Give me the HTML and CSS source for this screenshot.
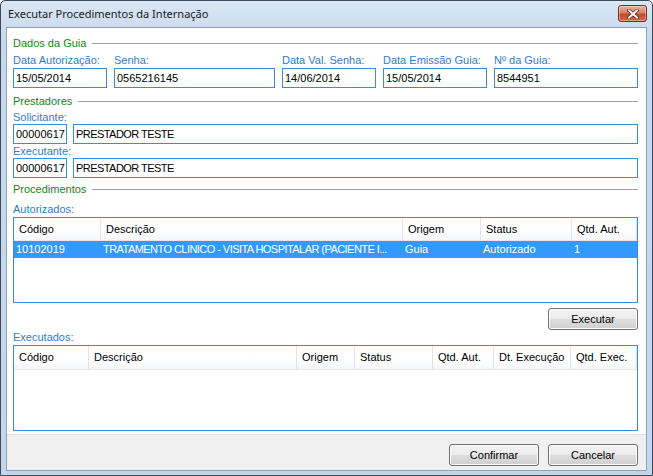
FILE: index.html
```html
<!DOCTYPE html>
<html>
<head>
<meta charset="utf-8">
<link rel="stylesheet" href="styles.css">
</head>
<body>
<div class="window">
  <div class="titlebar">
    <span class="title">Executar Procedimentos da Internação</span>
    <button class="close" aria-label="Fechar">
      <svg width="14" height="10" viewBox="0 0 14 10">
        <path d="M3 1.5 L11 8.5 M11 1.5 L3 8.5" stroke="#5a2018" stroke-width="3.4" stroke-linecap="square" fill="none"/>
        <path d="M3 1.5 L11 8.5 M11 1.5 L3 8.5" stroke="#ffffff" stroke-width="2" stroke-linecap="square" fill="none"/>
      </svg>
    </button>
  </div>
  <div class="client">
    <div class="content">
      <div class="section"><span>Dados da Guia</span><i class="rule"></i></div>
      <div class="guia-grid">
        <div class="field"><label class="lbl">Data Autorização:</label><div class="input">15/05/2014</div></div>
        <div class="field"><label class="lbl">Senha:</label><div class="input">0565216145</div></div>
        <div class="field"><label class="lbl">Data Val. Senha:</label><div class="input">14/06/2014</div></div>
        <div class="field"><label class="lbl">Data Emissão Guia:</label><div class="input">15/05/2014</div></div>
        <div class="field"><label class="lbl">Nº da Guia:</label><div class="input">8544951</div></div>
      </div>

      <div class="section s2"><span>Prestadores</span><i class="rule"></i></div>
      <label class="lbl l2">Solicitante:</label>
      <div class="prest-row"><div class="input">00000617</div><div class="input caps">PRESTADOR TESTE</div></div>
      <label class="lbl">Executante:</label>
      <div class="prest-row"><div class="input">00000617</div><div class="input caps">PRESTADOR TESTE</div></div>

      <div class="section s3"><span>Procedimentos</span><i class="rule"></i></div>
      <label class="lbl l3">Autorizados:</label>
      <div class="grid-table t1">
        <div class="row head">
          <div>Código</div><div>Descrição</div><div>Origem</div><div>Status</div><div>Qtd. Aut.</div>
        </div>
        <div class="row sel">
          <div>10102019</div><div class="caps">TRATAMENTO CLINICO - VISITA HOSPITALAR (PACIENTE I...</div><div>Guia</div><div>Autorizado</div><div>1</div>
        </div>
      </div>
      <div class="exec-bar"><button class="btn">Executar</button></div>
      <label class="lbl">Executados:</label>
      <div class="grid-table t2">
        <div class="row head">
          <div>Código</div><div>Descrição</div><div>Origem</div><div>Status</div><div>Qtd. Aut.</div><div>Dt. Execução</div><div>Qtd. Exec.</div>
        </div>
      </div>
    </div>
    <div class="footer">
      <button class="btn">Confirmar</button>
      <button class="btn">Cancelar</button>
    </div>
  </div>
</div>
</body>
</html>
```

FILE: styles.css
```css
html, body {
  margin: 0;
  padding: 0;
  width: 653px;
  height: 476px;
  overflow: hidden;
  background: #ffffff;
}

.window {
  box-sizing: border-box;
  width: 653px;
  height: 476px;
  border: 1px solid #3e4a57;
  border-radius: 5px 5px 0 0;
  background: linear-gradient(#d9e6f4, #c6d8ed 40px, #c4d6ec);
  padding: 0 5px 5px 5px;
  display: flex;
  flex-direction: column;
  font-family: "Liberation Sans", Arial, sans-serif;
  font-size: 11px;
  color: #000;
}

.titlebar {
  height: 26px;
  flex: none;
  display: flex;
  align-items: flex-start;
  justify-content: space-between;
}

.title {
  font-family: "Noto Sans", "Open Sans", sans-serif;
  font-size: 11px;
  line-height: 14px;
  color: #1b1b1b;
  padding: 6px 0 0 2px;
}

.close {
  width: 29px;
  height: 17px;
  margin-top: 4px;
  padding: 0;
  border: 1px solid #6d3326;
  border-radius: 3px;
  background: linear-gradient(#eab2a3 0%, #d9826b 45%, #c54a2d 55%, #d66a48 100%);
  display: flex;
  align-items: center;
  justify-content: center;
  box-shadow: inset 0 0 0 1px rgba(255,255,255,0.35);
}

.client {
  flex: 1;
  display: flex;
  flex-direction: column;
  border: 1px solid #8ea2b8;
  background: #ffffff;
}

.content {
  flex: 1;
  padding: 8px 8px 0 6px;
  display: flex;
  flex-direction: column;
}

.section {
  height: 14px;
  display: flex;
  align-items: center;
  gap: 6px;
  color: #0e8a12;
}
.section .rule {
  flex: 1;
  height: 1px;
  background: #a0a0a0;
  margin-top: 1px;
}
.s2 { margin-top: 6px; }
.s3 { margin-top: 4px; }

.lbl {
  display: block;
  height: 14px;
  line-height: 14px;
  color: #2f7cd0;
}
.l2 { margin-top: 2px; }
.l3 { margin-top: 6px; }

.guia-grid {
  margin-top: 3px;
  display: grid;
  grid-template-columns: 94px 161px 94px 104px 144px;
  column-gap: 7px;
}
.field .lbl { margin-bottom: 1px; }

.input {
  box-sizing: border-box;
  height: 20px;
  border: 1px solid #3f8ad8;
  padding: 0 2px;
  line-height: 18px;
  white-space: nowrap;
  overflow: hidden;
}

.caps { letter-spacing: -0.55px; }

.prest-row {
  display: grid;
  grid-template-columns: 54px 1fr;
  column-gap: 6px;
}

.grid-table {
  box-sizing: border-box;
  margin-top: 1px;
  height: 86px;
  border: 1px solid #3f8ad8;
}

.row {
  display: grid;
  white-space: nowrap;
}
.t1 .row { grid-template-columns: 87px 302px 78px 91px 65px; }
.t2 .row { grid-template-columns: 75px 208px 58px 78px 61px 77px 66px; }

.row > div {
  overflow: hidden;
}

.head {
  height: 22px;
  background: linear-gradient(#ffffff, #ffffff 50%, #f6f7f9);
  border-bottom: 1px solid #e4e6ea;
}
.head > div {
  line-height: 22px;
  padding-left: 5px;
  border-right: 1px solid #e1e3e6;
}
.t2 .head { height: 23px; }
.t2 .head > div { line-height: 23px; }

.sel {
  height: 17px;
  background: #3399ff;
  color: #ffffff;
}
.sel > div {
  line-height: 17px;
  padding-left: 2px;
}

.exec-bar {
  display: flex;
  justify-content: flex-end;
  margin-top: 5px;
}

.btn {
  box-sizing: border-box;
  width: 90px;
  height: 22px;
  border: 1px solid #707070;
  border-radius: 3px;
  background: linear-gradient(#f3f3f3 0%, #ebebeb 48%, #dddddd 52%, #cfcfcf 100%);
  box-shadow: inset 0 0 0 1px #fcfcfc;
  font-family: "Liberation Sans", Arial, sans-serif;
  font-size: 11px;
  color: #000;
  padding: 0;
}

.footer {
  flex: none;
  height: 36px;
  margin-top: 3px;
  background: #f0f0f0;
  border-top: 1px solid #dfdfdf;
  display: flex;
  justify-content: flex-end;
  align-items: flex-start;
  gap: 9px;
  padding: 9px 8px 0 0;
  box-sizing: border-box;
}
```
